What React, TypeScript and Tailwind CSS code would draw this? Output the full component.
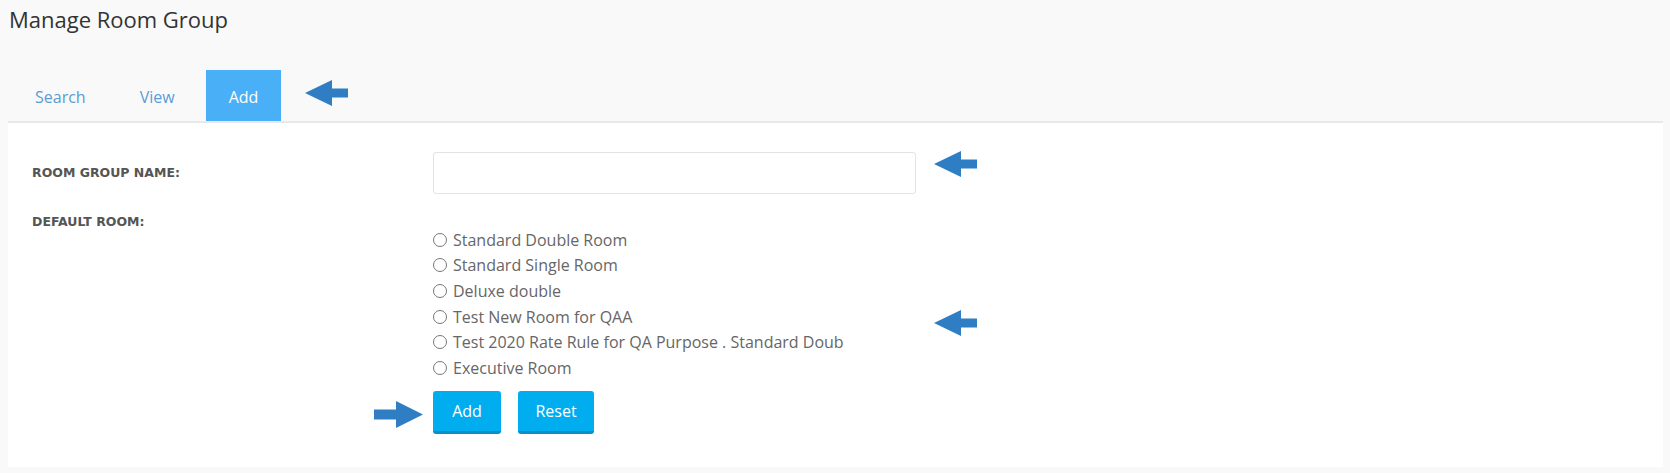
import { useState } from "react";

const rooms = [
  "Standard Double Room",
  "Standard Single Room",
  "Deluxe double",
  "Test New Room for QAA",
  "Test 2020 Rate Rule for QA Purpose . Standard Doub",
  "Executive Room",
];

function ArrowLeft({ className }: { className: string }) {
  return (
    <svg className={className} width="43" height="26" viewBox="0 0 43 26">
      <polygon points="0,13 27,0 27,8.5 43,8.5 43,17.5 27,17.5 27,26" fill="#2f7ec3" />
    </svg>
  );
}

function ArrowRight({ className }: { className: string }) {
  return (
    <svg className={className} width="49" height="27" viewBox="0 0 49 27">
      <polygon points="49,13.5 22,0 22,8.5 0,8.5 0,18.5 22,18.5 22,27" fill="#2f7ec3" />
    </svg>
  );
}

export default function App() {
  const [tab, setTab] = useState("Add");
  const [selected, setSelected] = useState<string | null>(null);

  return (
    <div className="relative min-h-screen bg-[#f9f9f9] font-['Open_Sans',sans-serif]">
      <h1 className="pl-[9px] pt-[4px] text-[22px] leading-[30px] text-[#333]">Manage Room Group</h1>

      {/* tabs */}
      <div className="mt-[36px] flex pl-[12px]">
        {["Search", "View", "Add"].map((t) => (
          <button
            key={t}
            type="button"
            onClick={() => setTab(t)}
            className={
              tab === t
                ? "mr-[8px] h-[51px] bg-[#49aff6] px-[23px] pt-[2px] text-[16px] text-white"
                : "mr-[8px] h-[51px] px-[23px] pt-[2px] text-[16px] text-[#5b9bd6]"
            }
          >
            {t}
          </button>
        ))}
      </div>
      <ArrowLeft className="absolute left-[305px] top-[80px]" />

      {/* panel */}
      <div className="mx-[8px] mr-[7px] h-[346px] border-t-2 border-[#e8e8e8] bg-white pt-[29px]">
        <div className="grid grid-cols-[401px_1fr] pl-[24px]">
          <div className="flex h-[42px] items-center font-['DejaVu_Sans',sans-serif] text-[12.5px] font-bold text-[#555]">
            ROOM GROUP NAME:
          </div>
          <div>
            <input
              type="text"
              className="h-[42px] w-[483px] rounded-[3px] border border-[#e3e3e3] bg-white px-3 text-[15px] outline-none"
            />
          </div>

          <div className="pt-[18px] font-['DejaVu_Sans',sans-serif] text-[12.5px] font-bold leading-[20px] text-[#555]">
            DEFAULT ROOM:
          </div>
          <div className="pt-[33px]">
            {rooms.map((r) => (
              <label key={r} className="flex h-[25.6px] cursor-pointer items-center text-[16px] text-[#666]">
                <span
                  onClick={() => setSelected(r)}
                  className="mr-[6px] flex h-[14px] w-[14px] items-center justify-center rounded-full border border-[#777] bg-white"
                >
                  {selected === r ? <span className="h-[8px] w-[8px] rounded-full bg-[#555]" /> : null}
                </span>
                {r}
              </label>
            ))}
          </div>

          <div />
          <div className="mt-[10px] flex gap-[17px]">
            <button
              type="button"
              className="h-[43px] w-[68px] rounded-[3px] border-b-[3px] border-[#0a8fc8] bg-[#00aeef] text-[16px] text-white"
            >
              Add
            </button>
            <button
              type="button"
              onClick={() => setSelected(null)}
              className="h-[43px] w-[76px] rounded-[3px] border-b-[3px] border-[#0a8fc8] bg-[#00aeef] text-[16px] text-white"
            >
              Reset
            </button>
          </div>
        </div>
      </div>

      <ArrowLeft className="absolute left-[934px] top-[151px]" />
      <ArrowLeft className="absolute left-[934px] top-[310px]" />
      <ArrowRight className="absolute left-[374px] top-[401px]" />
    </div>
  );
}
